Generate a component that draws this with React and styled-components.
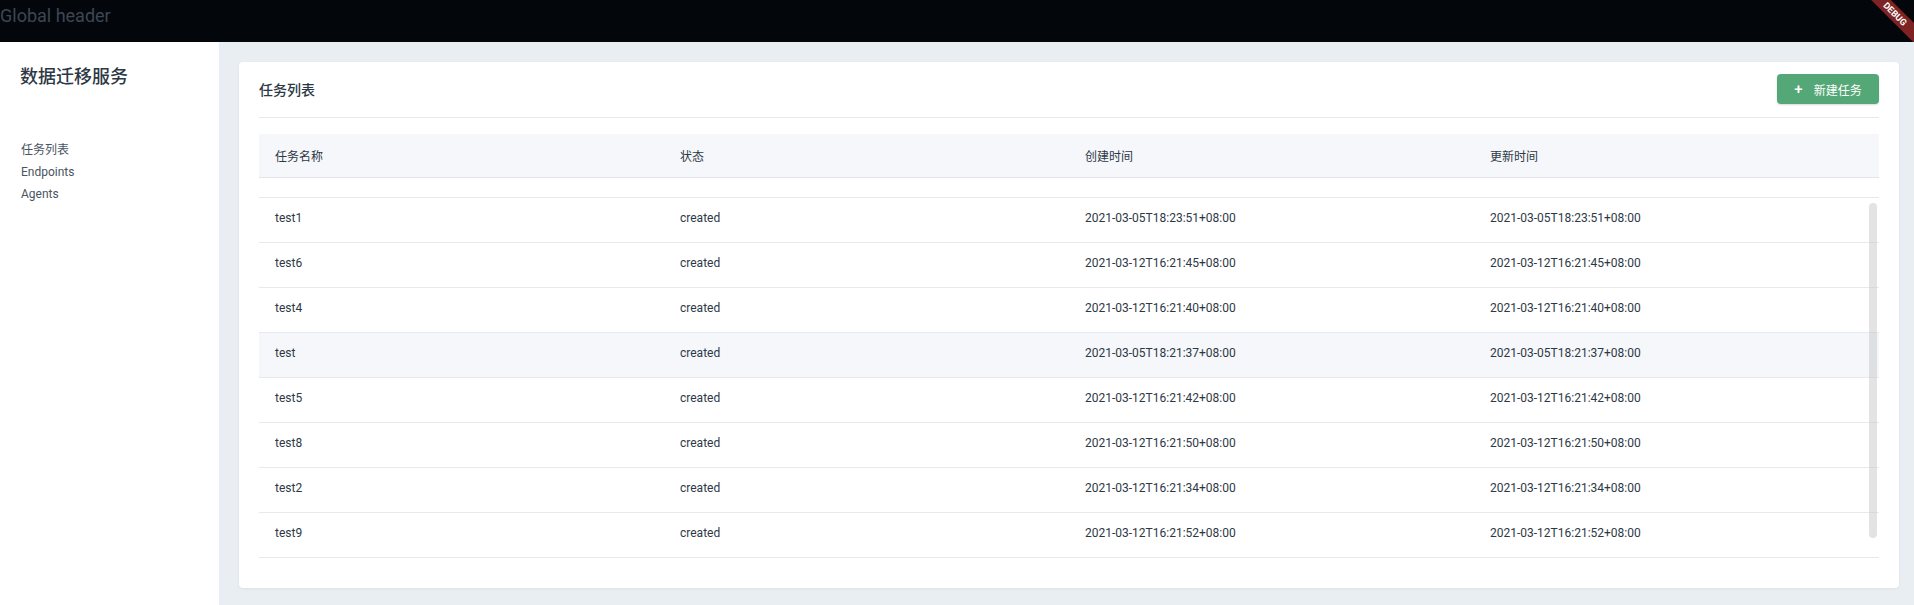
import React from 'react';
import styled, { createGlobalStyle } from 'styled-components';

const GlobalStyle = createGlobalStyle`
    html, body {
        margin: 0;
        padding: 0;
        font-family: Roboto, "Noto Sans CJK SC", sans-serif;
        color: #2d3845;
        overflow: hidden;
    }
    * { box-sizing: border-box; }
`

const tasks = [
    { name: 'test1', status: 'created', created: '2021-03-05T18:23:51+08:00', updated: '2021-03-05T18:23:51+08:00' },
    { name: 'test6', status: 'created', created: '2021-03-12T16:21:45+08:00', updated: '2021-03-12T16:21:45+08:00' },
    { name: 'test4', status: 'created', created: '2021-03-12T16:21:40+08:00', updated: '2021-03-12T16:21:40+08:00' },
    { name: 'test', status: 'created', created: '2021-03-05T18:21:37+08:00', updated: '2021-03-05T18:21:37+08:00', hover: true },
    { name: 'test5', status: 'created', created: '2021-03-12T16:21:42+08:00', updated: '2021-03-12T16:21:42+08:00' },
    { name: 'test8', status: 'created', created: '2021-03-12T16:21:50+08:00', updated: '2021-03-12T16:21:50+08:00' },
    { name: 'test2', status: 'created', created: '2021-03-12T16:21:34+08:00', updated: '2021-03-12T16:21:34+08:00' },
    { name: 'test9', status: 'created', created: '2021-03-12T16:21:52+08:00', updated: '2021-03-12T16:21:52+08:00' },
];

const menu = ['任务列表', 'Endpoints', 'Agents'];

const App = () => {
    return(<Page>
        <GlobalStyle />
        <Header>
            Global header
            <Ribbon><Band>DEBUG</Band></Ribbon>
        </Header>
        <Body>
            <Sidebar>
                <Brand>数据迁移服务</Brand>
                <Menu>
                    {menu.map(item => <MenuItem key={item}>{item}</MenuItem>)}
                </Menu>
            </Sidebar>
            <Main>
                <Card>
                    <CardHeader>
                        <CardTitle>任务列表</CardTitle>
                        <NewButton><Plus>+</Plus>新建任务</NewButton>
                    </CardHeader>
                    <Table>
                        <HeadRow>
                            <Cell>任务名称</Cell>
                            <Cell>状态</Cell>
                            <Cell>创建时间</Cell>
                            <Cell>更新时间</Cell>
                        </HeadRow>
                        <TableBody>
                            {tasks.map(t => (
                                <Row key={t.name} hover={t.hover}>
                                    <Cell>{t.name}</Cell>
                                    <Cell>{t.status}</Cell>
                                    <Cell>{t.created}</Cell>
                                    <Cell>{t.updated}</Cell>
                                </Row>
                            ))}
                            <Thumb />
                        </TableBody>
                    </Table>
                </Card>
            </Main>
        </Body>
    </Page>);
}

export default App;

const Page = styled.div`
    width: 100vw;
    height: 100vh;
    display: flex;
    flex-direction: column;
`

const Header = styled.header`
    position: relative;
    height: 42px;
    flex-shrink: 0;
    background: #03060a;
    color: #3d4754;
    font-size: 18px;
    line-height: 32px;
`

const Ribbon = styled.div`
    position: absolute;
    top: 0;
    right: 0;
    width: 50px;
    height: 42px;
    overflow: hidden;
`

const Band = styled.div`
    position: absolute;
    left: -9px;
    top: 7px;
    width: 80px;
    height: 14px;
    background: #7e2323;
    color: #fff;
    font-size: 9px;
    font-weight: 700;
    line-height: 14px;
    text-align: center;
    transform: rotate(45deg);
`

const Body = styled.div`
    flex: 1;
    display: flex;
    min-height: 0;
`

const Sidebar = styled.aside`
    width: 219px;
    flex-shrink: 0;
    background: #fff;
    padding: 24px 0 0 20px;
`

const Brand = styled.h1`
    margin: 0;
    font-size: 18px;
    font-weight: 500;
    line-height: 22px;
    color: #2d3845;
`

const Menu = styled.ul`
    list-style: none;
    margin: 51px 0 0 1px;
    padding: 0;
`

const MenuItem = styled.li`
    font-size: 12px;
    line-height: 22px;
    color: #4a5563;
`

const Main = styled.main`
    flex: 1;
    background: #e9eef2;
    padding: 20px 15px 17px 20px;
`

const Card = styled.section`
    background: #fff;
    border-radius: 4px;
    box-shadow: 0 1px 3px rgba(0, 0, 0, 0.06);
    padding: 12px 20px 30px;
`

const CardHeader = styled.div`
    display: flex;
    justify-content: space-between;
    align-items: center;
    padding-bottom: 13px;
    border-bottom: 1px solid #e6e9ed;
`

const CardTitle = styled.h2`
    margin: 0;
    font-size: 14px;
    font-weight: 500;
    color: #2d3845;
`

const NewButton = styled.button`
    display: flex;
    align-items: center;
    justify-content: center;
    width: 102px;
    height: 30px;
    border: none;
    border-radius: 4px;
    background: #54a776;
    box-shadow: 0 1px 2px rgba(0, 0, 0, 0.15);
    color: #fff;
    font-family: inherit;
    font-size: 12px;
    padding: 0;
`

const Plus = styled.span`
    font-size: 15px;
    font-weight: 500;
    margin-right: 11px;
    line-height: 1;
`

const Table = styled.div`
    margin-top: 16px;
`

const HeadRow = styled.div`
    display: grid;
    grid-template-columns: repeat(4, 1fr);
    align-items: center;
    height: 44px;
    background: #f5f7fa;
    border-bottom: 1px solid #e1e6eb;
    font-size: 12px;
    color: #2d3845;
`

const TableBody = styled.div`
    position: relative;
    margin-top: 19px;
    border-top: 1px solid #e6e9ed;
    height: 361px;
    overflow: hidden;
`

const Row = styled.div`
    display: grid;
    grid-template-columns: repeat(4, 1fr);
    align-items: center;
    height: 45px;
    padding-bottom: 4px;
    border-bottom: 1px solid #e6e9ed;
    background: ${p => p.hover ? '#f5f7fa' : '#fff'};
    font-size: 12px;
    color: #2d3845;
`

const Cell = styled.div`
    padding-left: 16px;
    white-space: nowrap;
`

const Thumb = styled.div`
    position: absolute;
    top: 5px;
    right: 2px;
    width: 8px;
    height: 335px;
    border-radius: 4px;
    background: rgba(200, 200, 200, 0.5);
`
